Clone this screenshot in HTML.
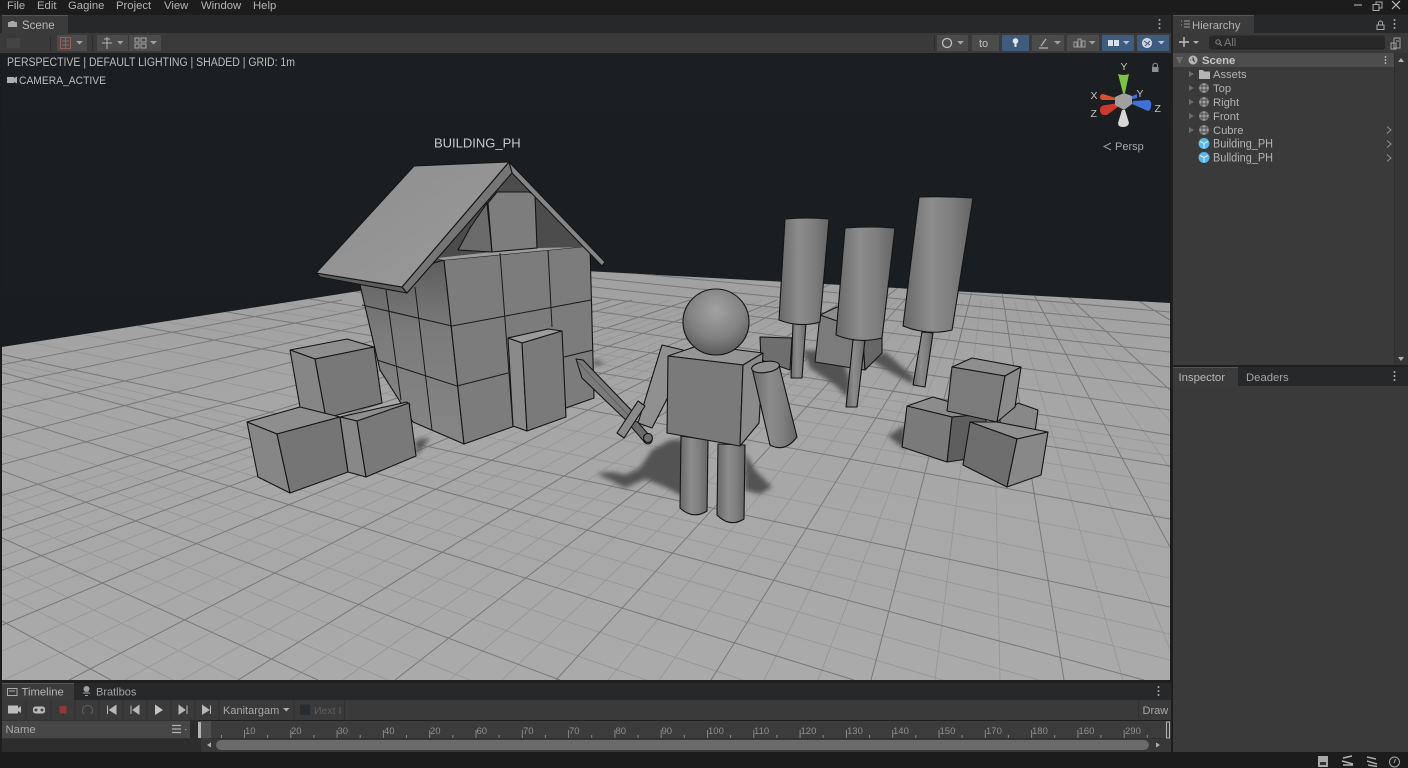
<!DOCTYPE html>
<html lang="en">
<head>
<meta charset="utf-8">
<title>Scene</title>
<style>
html,body{margin:0;padding:0;background:#1c1c1c;width:1408px;height:768px;overflow:hidden}
svg{display:block;position:absolute;left:0;top:0;overflow:hidden}
text{font-family:"Liberation Sans",sans-serif;font-size:11.3px;fill:#b4b4b4}
.o{stroke:#141414;stroke-width:1.1;stroke-linejoin:round}
.l{stroke:#1a1a1a;stroke-width:1;fill:none}
</style>
</head>
<body>
<svg width="1408" height="768" viewBox="0 0 1408 768" xmlns="http://www.w3.org/2000/svg">
<defs>
<linearGradient id="sky" x1="0" y1="0" x2="0" y2="1"><stop offset="0" stop-color="#1b1f21"/><stop offset="1" stop-color="#1a1b1d"/></linearGradient>
<linearGradient id="fl" x1="0" y1="0" x2="0" y2="1"><stop offset="0" stop-color="#a0a0a0"/><stop offset=".35" stop-color="#a6a6a6"/><stop offset="1" stop-color="#aaaaaa"/></linearGradient>
<linearGradient id="cyl" x1="0" y1="0" x2="1" y2="0"><stop offset="0" stop-color="#686868"/><stop offset=".4" stop-color="#8c8c8c"/><stop offset=".7" stop-color="#7e7e7e"/><stop offset="1" stop-color="#646464"/></linearGradient>
<linearGradient id="roof" x1="0" y1="0" x2="1" y2="1"><stop offset="0" stop-color="#8e8e8e"/><stop offset="1" stop-color="#9a9a9a"/></linearGradient>
<linearGradient id="wl" x1="0" y1="0" x2="0" y2="1"><stop offset="0" stop-color="#5e5e5e"/><stop offset=".4" stop-color="#7c7c7c"/><stop offset="1" stop-color="#858585"/></linearGradient>
<radialGradient id="hd" cx=".5" cy=".33" r=".7"><stop offset="0" stop-color="#a2a2a2"/><stop offset=".6" stop-color="#808080"/><stop offset="1" stop-color="#565656"/></radialGradient>
<filter id="bl" x="-20%" y="-20%" width="140%" height="140%"><feGaussianBlur stdDeviation="2.5"/></filter>
<clipPath id="vp"><rect x="2" y="53" width="1168" height="627"/></clipPath>
<clipPath id="fc"><polygon points="2,347 512,267 1170,303 1170,680 2,680"/></clipPath>
</defs>

<!-- chrome base -->
<rect width="1408" height="768" fill="#1c1c1c"/>
<rect x="0" y="15" width="1171" height="18" fill="#27282a"/>
<rect x="2" y="15" width="66" height="19" fill="#3b3b3b"/>
<rect x="2" y="15" width="66" height="1" fill="#2f5f86"/>
<rect x="0" y="33" width="1171" height="20" fill="#3a3a3a"/>

<!-- viewport -->
<g clip-path="url(#vp)">
<rect x="2" y="53" width="1168" height="627" fill="url(#sky)"/>
<g clip-path="url(#fc)">
<rect x="2" y="260" width="1168" height="420" fill="url(#fl)"/>
<path fill="none" stroke="#959595" stroke-width=".8" d="M0,318L1170,548M0,336L1170,578M0,360L1170,634M0,366L1170,660M0,386L1039,680M0,401L943,680M0,433L743,680M0,452L646,680M0,492L470,680M0,515L388,680M0,565L240,680M0,592L173,680M0,283L1170,484M0,292L1170,501M0,258L1170,445M0,267L1170,456
M125,680L815,300M182,680L830,300M290,680L857,300M343,680L870,300M449,680L890,300M502,680L897,300M608,680L920,300M659,680L935,300M764,680L957,300M818,680L963,300M935,680L981,300M1000,680L992,300M1123,680L1014,300M1170,649L1025,300M1170,468L1049,300M1170,421L1060,300M0,652L785,300M4,680L792,300M0,588L748,300M0,606L762,300M0,543L704,300M0,557L718,300M0,507L651,300M0,519L670,300"/>
<path fill="none" stroke="#787878" stroke-width="1" d="M0,208L1170,312M0,212L1170,325M0,216L1170,338M0,220L1170,352M0,225L1170,367M0,232L1170,388M0,240L1170,410M0,250L1170,435M0,275L1170,466M0,300L1170,519M0,354L1170,607M0,372L1144,680M0,415L854,680M0,470L560,680M0,537L318,680M0,620L111,680
M69,680L838,280M238,680L877,280M395,680L908,280M556,680L923,280M711,680L963,280M871,680L975,280M1064,680L1000,280M1170,547L1026,280M1170,390L1050,280M1170,320L1104,280M0,626L777,300M0,571L733,300M0,531L690,300M0,496L632,300M0,465L611,300M0,438L530,300M0,410L472,300M0,385L405,300M0,365L342,300"/>
</g>

<!-- shadows -->
<g fill="#525252" filter="url(#bl)">
<path d="M597,474Q610,470 625,475L640,468L652,450L670,440L684,440L684,497L665,487L645,479L625,488L612,481Z"/>
<path d="M745,452L755,470L772,487L760,494L745,490Z"/>
<path d="M803,350L840,352L850,380L848,398L835,385L810,368Z"/>
<path d="M868,358L885,352L915,378L912,384L890,372Z"/>
<path d="M888,436L905,425L905,450Z"/>
<path d="M416,440L430,438L416,456Z"/>
<path d="M594,360L606,363L594,366Z"/>
</g>

<!-- back cubes -->
<polygon class="o" points="760,337 792,338 790,370 761,360" fill="#6e6e6e"/>
<polygon class="o" points="820,315 837,307 882,325 863,340" fill="#8c8c8c"/>
<polygon class="o" points="820,315 863,330 865,370 815,362" fill="#7b7b7b"/>
<polygon class="o" points="863,340 882,338 882,353 865,370" fill="#666"/>

<!-- trees -->
<g class="o">
<polygon points="793,323 806,323 802,378 791,378" fill="url(#cyl)"/>
<path d="M785,219Q807,217 829,219L820,322Q800,328 779,320Z" fill="url(#cyl)"/>
<polygon points="853,340 865,340 857,407 846,407" fill="url(#cyl)"/>
<path d="M845,228Q870,226 895,228L882,338Q858,344 836,335Z" fill="url(#cyl)"/>
<polygon points="922,332 933,333 925,387 913,385" fill="url(#cyl)"/>
<path d="M919,197Q946,196 973,198L952,330Q928,336 903,326Z" fill="url(#cyl)"/>
</g>

<!-- house -->
<polygon points="407,293 512,173 602,264 590,247 444,262" fill="#4c4c4c"/>
<polygon class="o" points="360,285 444,260 464,444 413,422 380,370" fill="url(#wl)"/>
<polygon class="o" points="444,260 590,246 594,398 464,444" fill="#7c7c7c"/>
<polygon points="437,258 492,252 537,248 590,246 444,260" fill="#9c9c9c"/>
<path class="l" d="M386,290L401,400M415,287L432,430M500,253L513,427M548,250L552,327M362,305L452,326L591,300M377,360L457,386L508,373M564,357L593,350"/>
<polygon points="512,173 590,247 537,248 535,195 529,192 497,192" fill="#4c4c4c"/>
<polygon class="o" points="487,203 492,252 458,250 470,228" fill="#6b6b6b"/>
<polygon class="o" points="488,203 497,192 529,192 535,195 537,248 492,252" fill="#7d7d7d"/>
<polygon class="o" points="509,162 605,262 602,266 512,173" fill="#858585"/>
<polygon class="o" points="316,273 320,277 407,293 402,287" fill="#5e5e5e"/>
<polygon class="o" points="402,287 509,162 512,173 407,293" fill="#757575"/>
<polygon class="o" points="414,166 509,162 402,287 316,273" fill="url(#roof)"/>
<polygon class="o" points="508,338 548,329 562,331 522,343" fill="#9c9c9c"/>
<polygon class="o" points="508,338 522,343 527,431 513,426" fill="#8a8a8a"/>
<polygon class="o" points="522,343 562,331 566,417 527,431" fill="#7a7a7a"/>

<!-- left boxes -->
<polygon class="o" points="290,350 347,339 374,347 315,359" fill="#8e8e8e"/>
<polygon class="o" points="290,350 315,359 326,418 300,407" fill="#868686"/>
<polygon class="o" points="315,359 374,347 382,403 326,418" fill="#787878"/>
<polygon class="o" points="247,422 300,407 340,417 277,434" fill="#8e8e8e"/>
<polygon class="o" points="247,422 277,434 290,493 258,477" fill="#868686"/>
<polygon class="o" points="277,434 340,417 348,472 290,493" fill="#757575"/>
<polygon class="o" points="340,417 407,402 410,405 357,421" fill="#8e8e8e"/>
<polygon class="o" points="340,417 357,421 366,477 348,472" fill="#888"/>
<polygon class="o" points="357,421 409,403 416,456 366,477" fill="#797979"/>

<!-- right pile -->
<polygon class="o" points="1000,418 1018,403 1038,410 1035,432 1000,432" fill="#888"/>
<polygon class="o" points="907,406 933,397 990,414 952,417" fill="#8c8c8c"/>
<polygon class="o" points="952,417 988,414 975,458 947,462" fill="#5e5e5e"/>
<polygon class="o" points="907,406 952,417 947,462 902,447" fill="#7a7a7a"/>
<polygon class="o" points="952,367 972,358 1021,367 1005,376" fill="#8e8e8e"/>
<polygon class="o" points="952,367 1005,376 997,422 947,411" fill="#7b7b7b"/>
<polygon class="o" points="1005,376 1021,367 1015,407 997,422" fill="#8a8a8a"/>
<polygon class="o" points="970,422 997,422 1048,432 1017,439" fill="#909090"/>
<polygon class="o" points="970,422 1017,439 1007,487 963,465" fill="#6e6e6e"/>
<polygon class="o" points="1017,439 1048,432 1041,475 1007,487" fill="#888"/>

<!-- character -->
<polygon class="o" points="662,345 683,350 668,397 652,428 638,423" fill="#909090"/>
<g class="o">
<path d="M681,436L680,508Q693,520 707,511L708,440Z" fill="url(#cyl)"/>
<path d="M718,444L717,515Q730,528 744,519L745,445Z" fill="url(#cyl)"/>
</g>
<polygon class="o" points="668,356 700,345 763,353 743,365" fill="#959595"/>
<polygon class="o" points="668,356 743,365 740,446 667,433" fill="#7a7a7a"/>
<polygon class="o" points="743,365 763,353 759,423 740,446" fill="#8a8a8a"/>
<circle class="o" cx="716" cy="322" r="33" fill="url(#hd)"/>
<path class="o" d="M752,368L770,445Q785,453 797,437L779,365Z" fill="url(#cyl)"/>
<ellipse class="o" cx="765.500" cy="367" rx="14" ry="5.500" transform="rotate(-8 765.500 367)" fill="#8f8f8f"/>
<!-- sword -->
<path d="M635,425L648,440" stroke="#141414" stroke-width="9" stroke-linecap="round"/>
<path d="M635,425L648,440" stroke="#6a6a6a" stroke-width="7" stroke-linecap="round"/>
<polygon class="o" points="576,359 583,360 634,413 629,423 582,378" fill="#7a7a7a"/>
<path d="M578,362L631,418" stroke="#5e5e5e" stroke-width="1"/>
<polygon class="o" points="638,401 645,406 624,438 617,433" fill="#8a8a8a"/>
<circle class="o" cx="648" cy="438" r="4.500" fill="#6e6e6e"/>

<text x="434" y="147.500" style="font-size:13px;fill:#c8c8c8">BUILDING_PH</text>

<!-- overlay -->
<text x="7" y="66" textLength="288" lengthAdjust="spacingAndGlyphs" style="font-size:11.500px;fill:#bdbdbd">PERSPECTIVE | DEFAULT LIGHTING | SHADED | GRID: 1m</text>
<rect x="7" y="77" width="7" height="6" fill="#b0b0b0"/><path d="M14,78L17,76.500V83.500L14,82Z" fill="#b0b0b0"/>
<text x="19" y="84" textLength="87" lengthAdjust="spacingAndGlyphs" style="font-size:11px;fill:#bdbdbd">CAMERA_ACTIVE</text>

<!-- gizmo -->
<path d="M1118,74Q1124,76 1129,74L1125,93H1123Z" fill="#7cc243"/>
<path d="M1100,97Q1100,94 1103,94L1116,98V100L1103,100Q1100,100 1100,97Z" fill="#d6512b"/>
<path d="M1100,110Q1100,105 1106,105L1118,103L1119,106L1107,115Q1100,116 1100,110Z" fill="#c93a2d"/>
<path d="M1151,106Q1152,102 1149,100L1133,101L1132,104L1148,111Q1151,110 1151,106Z" fill="#3f71d8"/>
<path d="M1137,94L1128,98L1129,100L1137,98Z" fill="#3f71d8"/>
<path d="M1122,110H1125L1129,123Q1128,127 1123,127Q1118,127 1118,123Z" fill="#d8d8d8"/>
<path d="M1115,97L1124,93L1132,96L1132,104L1124,110L1115,105Z" fill="#a0a0a0"/>
<text x="1120.500" y="70" style="font-size:10.500px;fill:#c4c4c4">Y</text>
<text x="1090.500" y="99" style="font-size:10.500px;fill:#c4c4c4">X</text>
<text x="1136.500" y="97" style="font-size:10.500px;fill:#c4c4c4">Y</text>
<text x="1090.500" y="117" style="font-size:10.500px;fill:#c4c4c4">Z</text>
<text x="1154.500" y="112" style="font-size:10.500px;fill:#c4c4c4">Z</text>
<rect x="1152" y="67" width="6.500" height="5" fill="#8f8f8f"/><path d="M1153,67V65.500A2.200,2.200 0 0 1 1157.500,65.500V67" stroke="#8f8f8f" fill="none"/>
<path d="M1111,143L1104,146.500L1111,150" stroke="#999" fill="none"/>
<text x="1115" y="150" style="font-size:11px;fill:#a8a8a8">Persp</text>
</g>

<!-- menu -->
<text x="7" y="9">File</text><text x="37" y="9">Edit</text><text x="68" y="9">Gagine</text><text x="116" y="9">Project</text><text x="164" y="9">View</text><text x="201" y="9">Window</text><text x="253" y="9">Help</text>
<path d="M1354,5H1362" stroke="#aaa" stroke-width="1.200"/>
<path d="M1373,4.500h6v6h-6zM1376,4.500V2h6v6h-3" stroke="#aaa" fill="none"/>
<path d="M1392,1L1400,9M1400,1L1392,9" stroke="#bbb" stroke-width="1.200"/>

<!-- Scene tab + toolbar -->
<path d="M8,22h2l1,-1h3l1,1h2v5H8z" fill="#a6a6a6"/>
<text x="22" y="29" style="font-size:11.500px;fill:#b8b8b8">Scene</text>
<g fill="#a8a8a8"><circle cx="1159.500" cy="20" r="1"/><circle cx="1159.500" cy="24" r="1"/><circle cx="1159.500" cy="28" r="1"/></g>
<rect x="7" y="38" width="13" height="10" fill="#444"/>
<rect x="50" y="36" width="1" height="15" fill="#2c2c2c"/><rect x="92" y="36" width="1" height="15" fill="#2c2c2c"/><rect x="934" y="36" width="1" height="15" fill="#2c2c2c"/>
<g fill="#4b4b4b">
<rect x="57" y="35" width="30" height="16" rx="1"/><rect x="97" y="35" width="31" height="16" rx="1"/><rect x="129" y="35" width="32" height="16" rx="1"/>
<rect x="937" y="35" width="31" height="16" rx="1"/><rect x="972" y="35" width="27" height="16" rx="1"/>
<rect x="1032" y="35" width="32" height="16" rx="1"/><rect x="1067" y="35" width="32" height="16" rx="1"/>
</g>
<g fill="#3f5b7d"><rect x="1002" y="35" width="27" height="16" rx="1"/><rect x="1102" y="35" width="32" height="16" rx="1"/><rect x="1137" y="35" width="32" height="16" rx="1"/></g>
<rect x="60.500" y="37.500" width="10" height="11" fill="none" stroke="#95605c"/><path d="M62,41h7M62,45h7M65.500,38V48" stroke="#95605c"/>
<path d="M107,37V49M102,43H112M104,39H110" stroke="#b0b0b0" fill="none"/>
<path d="M135,38h4v4h-4zM141,38h5v4h-5zM135,44h4v4h-4zM141,44h5v4h-5z" fill="none" stroke="#a5a5a5"/>
<g fill="#a0a0a0"><path d="M76,41h7l-3.500,3.500z"/><path d="M117,41h6.500l-3.250,3.500z"/><path d="M150,41h7l-3.500,3.500z"/><path d="M957,41h7l-3.500,3.500z"/><path d="M1054,41h7l-3.500,3.500z"/><path d="M1089,41h6.500l-3.250,3.500z"/></g>
<g fill="#b3c4da"><path d="M1123,41h6.500l-3.250,3.500z"/><path d="M1158,41h6.500l-3.250,3.500z"/></g>
<circle cx="947" cy="43" r="4.500" fill="none" stroke="#c0c0c0" stroke-width="1.300"/>
<text x="979" y="47" style="font-size:11px;fill:#c0c0c0">to</text>
<circle cx="1015.500" cy="41" r="2.800" fill="#e6e6e6"/><rect x="1014.500" y="42" width="2" height="5" fill="#e6e6e6"/>
<path d="M1039,48H1048M1041,46L1046,39" stroke="#b0b0b0" stroke-width="1.300"/>
<path d="M1074,47V42h3v5zM1078,47V39h3v8zM1082,47V41h3v6z" fill="none" stroke="#9c9c9c"/>
<path d="M1108,40h5v6h-5zM1114,40h5v6h-5z" fill="#d8dfe8"/>
<circle cx="1147" cy="43" r="4.500" fill="#c5ced9" stroke="#e4e4e4"/><path d="M1144,41L1150,45M1150,41L1145,46" stroke="#3f5b7d"/>

<!-- hierarchy -->
<rect x="1171" y="14" width="237" height="352" fill="#1f1f20"/>
<rect x="1173" y="15" width="235" height="350" fill="#3a3a3a"/>
<rect x="1173" y="15" width="235" height="18" fill="#27282a"/>
<rect x="1173" y="15" width="81" height="19" fill="#3b3b3b"/>
<rect x="1173" y="15" width="81" height="1" fill="#2f5f86"/>
<path d="M1181,21h1M1181,25h1M1184,21h6M1184,24h6M1184,27h6" stroke="#9c9c9c"/>
<text x="1192" y="29" style="font-size:11.300px;fill:#b4b4b4">Hierarchy</text>
<rect x="1377" y="25" width="7" height="4.500" fill="none" stroke="#a8a8a8"/><path d="M1378.500,25V23A2,2 0 0 1 1382.500,23V25" fill="none" stroke="#a8a8a8"/>
<g fill="#a8a8a8"><circle cx="1394.500" cy="20" r="1"/><circle cx="1394.500" cy="24" r="1"/><circle cx="1394.500" cy="28" r="1"/></g>
<rect x="1173" y="33" width="235" height="20" fill="#3a3a3a"/>
<path d="M1184,37V47M1179,42H1189" stroke="#c0c0c0" stroke-width="1.400"/>
<path d="M1193,41h6l-3,3z" fill="#b0b0b0"/>
<rect x="1209" y="35.500" width="176" height="14" rx="3" fill="#282828"/>
<circle cx="1218" cy="42" r="2.200" fill="none" stroke="#888"/><path d="M1219.500,43.500L1222,46" stroke="#888"/>
<text x="1224" y="46" style="font-size:11px;fill:#7c7c7c">All</text>
<path d="M1394,38h6v10h-6zM1391,43h5v6h-5zM1396,41h3" fill="none" stroke="#a0a0a0"/>
<rect x="1173" y="53" width="222" height="14" fill="#4d4d4d"/>
<rect x="1395" y="53" width="13" height="312" fill="#353535"/>
<rect x="1394" y="53" width="1" height="312" fill="#2e2e2e"/>
<path d="M1398,62L1401,58L1404,62Z" fill="#b0b0b0"/>
<path d="M1398,357L1401,361L1404,357Z" fill="#b0b0b0"/>
<path d="M1176,57h7l-3.500,7z" fill="#6c6c6c"/>
<circle cx="1193" cy="60" r="4.500" fill="#b5b5b5"/><path d="M1193,57V60L1195,62M1190,60H1191" stroke="#4d4d4d"/>
<text x="1202" y="64" style="font-size:11.300px;font-weight:bold;fill:#c4c4c4">Scene</text>
<g fill="#c0c0c0"><circle cx="1385.500" cy="57" r=".9"/><circle cx="1385.500" cy="60" r=".9"/><circle cx="1385.500" cy="63" r=".9"/></g>
<g fill="#6c6c6c"><path d="M1189,71v6l5,-3z"/><path d="M1189,85v6l5,-3z"/><path d="M1189,99v6l5,-3z"/><path d="M1189,113v6l5,-3z"/><path d="M1189,127v6l5,-3z"/></g>
<path d="M1199,70h4l1,1.500h6V79h-11z" fill="#b4b4b4"/>
<g fill="#9f9f9f" stroke="#555" stroke-width=".5">
<circle cx="1204" cy="88" r="5"/><circle cx="1204" cy="102" r="5"/><circle cx="1204" cy="116" r="5"/><circle cx="1204" cy="130" r="5"/>
</g>
<path d="M1199.500,86H1208.500M1199.500,90H1208.500M1202,83.500V92.500M1206,83.500V92.500M1199.500,100H1208.500M1199.500,104H1208.500M1202,97.500V106.500M1206,97.500V106.500M1199.500,114H1208.500M1199.500,118H1208.500M1202,111.500V120.500M1206,111.500V120.500M1199.500,128H1208.500M1199.500,132H1208.500M1202,125.500V134.500M1206,125.500V134.500" stroke="#4d4d4d" stroke-width=".9"/>
<g fill="#5ab7e8"><circle cx="1204" cy="143.500" r="5.500"/><circle cx="1204" cy="157.500" r="5.500"/></g>
<path d="M1200,141.500L1204,143.500L1208,141.500M1204,143.500V148M1200,155.500L1204,157.500L1208,155.500M1204,157.500V162" stroke="#d8f0fc" fill="none"/>
<text x="1213" y="78" style="font-size:11.200px">Assets</text>
<text x="1213" y="92" style="font-size:11.200px">Top</text>
<text x="1213" y="106" style="font-size:11.200px">Right</text>
<text x="1213" y="120" style="font-size:11.200px">Front</text>
<text x="1213" y="134" style="font-size:11.200px">Cubre</text>
<text x="1213" y="147.500" textLength="60" lengthAdjust="spacingAndGlyphs" style="font-size:11.500px">Building_PH</text>
<text x="1213" y="161.500" textLength="60" lengthAdjust="spacingAndGlyphs" style="font-size:11.500px">Bullding_PH</text>
<path d="M1387,126.500L1391,130L1387,133.500M1387,140.500L1391,144L1387,147.500M1387,154.500L1391,158L1387,161.500" stroke="#8f8f8f" fill="none"/>

<!-- inspector -->
<rect x="1171" y="365" width="237" height="22" fill="#1f1f20"/>
<rect x="1173" y="367" width="235" height="19" fill="#27282a"/>
<rect x="1173" y="367" width="65" height="19" fill="#3b3b3b"/>
<rect x="1173" y="367" width="65" height="1" fill="#2f5f86"/>
<text x="1178.500" y="381" style="font-size:11.300px;fill:#b8b8b8">Inspector</text>
<text x="1246" y="381" style="font-size:11.300px;fill:#a4a4a4">Deaders</text>
<g fill="#b0b0b0"><circle cx="1394.500" cy="372" r="1"/><circle cx="1394.500" cy="376" r="1"/><circle cx="1394.500" cy="380" r="1"/></g>
<rect x="1173" y="386" width="235" height="366" fill="#3a3a3a"/>

<!-- timeline -->
<rect x="0" y="680" width="1172" height="72" fill="#1f1f20"/>
<rect x="2" y="683" width="1169" height="17" fill="#27282a"/>
<rect x="2" y="683" width="72" height="17" fill="#3b3b3b"/>
<rect x="2" y="683" width="72" height="1" fill="#2f5f86"/>
<rect x="7.500" y="688.500" width="9.500" height="7" fill="none" stroke="#aaa"/><path d="M9,691H15" stroke="#aaa"/>
<text x="21.500" y="695.500" style="font-size:11.300px;fill:#b8b8b8">Timeline</text>
<circle cx="86.500" cy="689" r="3" fill="#a0a0a0"/><path d="M83,693H90M85,695.500H88" stroke="#a0a0a0"/>
<text x="96" y="695.500" style="font-size:11px;fill:#a4a4a4">Bratlbos</text>
<g fill="#a8a8a8"><circle cx="1158.500" cy="687" r="1"/><circle cx="1158.500" cy="691" r="1"/><circle cx="1158.500" cy="695" r="1"/></g>
<rect x="2" y="700" width="1169" height="20" fill="#3a3a3a"/>
<path d="M26,700V720M51,700V720M75,700V720M99,700V720M123,700V720M147,700V720M171,700V720M195,700V720M219,700V720M294,700V720M344.500,700V720M1138.500,700V720" stroke="#303030"/>
<rect x="8" y="705.500" width="10" height="8" fill="#bcbcbc"/><path d="M18,708L21,706V713L18,711Z" fill="#bcbcbc"/>
<rect x="33" y="706.500" width="12" height="7" rx="2.500" fill="#bcbcbc"/><circle cx="36" cy="710" r="1.500" fill="#444"/><circle cx="42" cy="710" r="1.500" fill="#444"/>
<rect x="59.500" y="706" width="7" height="7.500" fill="#8f3a35"/>
<path d="M84,714A5,5 0 1 1 91,714" stroke="#5e5e5e" fill="none"/>
<path d="M107.500,705.500V714M116,705.500V714L109.500,710Z" stroke="#b8b8b8" fill="#b8b8b8"/>
<path d="M131,705.500V714M139,705.500V714L133,710Z" stroke="#b8b8b8" fill="#b8b8b8"/>
<path d="M155,704.500V715L163,710Z" fill="#c4c4c4"/>
<path d="M179,705.500V714L185,710ZM187,705.500V714" stroke="#b8b8b8" fill="#b8b8b8"/>
<path d="M202.500,705.500V714L209,710ZM210.500,705.500V714" stroke="#b8b8b8" fill="#b8b8b8"/>
<text x="223" y="714" style="font-size:11px;fill:#a8a8a8">Kanitarɡam</text>
<path d="M283,708h6.500l-3.250,3.500z" fill="#b0b0b0"/>
<rect x="300" y="704.500" width="10" height="10.500" rx="1" fill="#2a2d2f"/>
<text x="314" y="714" style="font-size:10.500px;fill:#5e5e5e">Иext I</text>
<text x="1142.500" y="714" style="font-size:11px;fill:#a8a8a8">Draw</text>

<rect x="2" y="720.500" width="188" height="18" fill="#474747"/>
<text x="5.500" y="733" style="font-size:11.300px;fill:#a8a8a8">Name</text>
<path d="M172,725.500H181M172,729H181M172,732.500H181" stroke="#b0b0b0" stroke-width="1.200"/><path d="M185,729.500h1.500" stroke="#999"/>
<rect x="190" y="720" width="8" height="19" fill="#2b2b2b"/>
<rect x="198" y="721" width="973" height="17.500" fill="#3c3c3c"/>
<rect x="198" y="721" width="13" height="17.500" fill="#4f4f4f"/>
<rect x="198" y="722" width="3" height="16" fill="#b4b4b4"/>
<rect x="1166.500" y="722" width="3" height="16" fill="#3c3c3c" stroke="#b4b4b4"/>
<path stroke="#888" d="M244.500,730V738M290.800,730V738M337.100,730V738M383.400,730V738M429.700,730V738M476,730V738M522.300,730V738M568.600,730V738M614.900,730V738M661.200,730V738M707.500,730V738M753.800,730V738M800.100,730V738M846.400,730V738M892.700,730V738M939,730V738M985.300,730V738M1031.600,730V738M1077.900,730V738M1124.200,730V738M221.500,735V738M267.600,735V738M313.900,735V738M360.200,735V738M406.500,735V738M452.800,735V738M499.100,735V738M545.400,735V738M591.700,735V738M638,735V738M684.300,735V738M730.600,735V738M776.900,735V738M823.200,735V738M869.500,735V738M915.800,735V738M962.100,735V738M1008.400,735V738M1054.700,735V738M1101,735V738M1147.300,735V738"/>
<text x="245" y="734" style="font-size:9.500px;fill:#8f8f8f">10</text>
<text x="291" y="734" style="font-size:9.500px;fill:#8f8f8f">20</text>
<text x="337.500" y="734" style="font-size:9.500px;fill:#8f8f8f">30</text>
<text x="384" y="734" style="font-size:9.500px;fill:#8f8f8f">40</text>
<text x="430" y="734" style="font-size:9.500px;fill:#8f8f8f">20</text>
<text x="476.500" y="734" style="font-size:9.500px;fill:#8f8f8f">60</text>
<text x="523" y="734" style="font-size:9.500px;fill:#8f8f8f">70</text>
<text x="569" y="734" style="font-size:9.500px;fill:#8f8f8f">70</text>
<text x="615.500" y="734" style="font-size:9.500px;fill:#8f8f8f">80</text>
<text x="661.500" y="734" style="font-size:9.500px;fill:#8f8f8f">90</text>
<text x="708" y="734" style="font-size:9.500px;fill:#8f8f8f">100</text>
<text x="754" y="734" style="font-size:9.500px;fill:#8f8f8f">110</text>
<text x="800.500" y="734" style="font-size:9.500px;fill:#8f8f8f">120</text>
<text x="847" y="734" style="font-size:9.500px;fill:#8f8f8f">130</text>
<text x="893" y="734" style="font-size:9.500px;fill:#8f8f8f">140</text>
<text x="939.500" y="734" style="font-size:9.500px;fill:#8f8f8f">150</text>
<text x="986" y="734" style="font-size:9.500px;fill:#8f8f8f">170</text>
<text x="1032" y="734" style="font-size:9.500px;fill:#8f8f8f">180</text>
<text x="1078.500" y="734" style="font-size:9.500px;fill:#8f8f8f">160</text>
<text x="1125" y="734" style="font-size:9.500px;fill:#8f8f8f">290</text>
<rect x="2" y="739" width="199" height="13" fill="#2d2d2d"/>
<rect x="201" y="739" width="970" height="13" fill="#383838"/>
<rect x="216" y="740" width="933" height="10" rx="5" fill="#6a6a6a"/>
<path d="M211,742.500V747.500L207,745Z" fill="#b0b0b0"/>
<path d="M1156,742.500V747.500L1160,745Z" fill="#b0b0b0"/>

<!-- status -->
<rect x="1318" y="756" width="10" height="11" fill="#a8a8a8"/><rect x="1320" y="762" width="6" height="3" fill="#333"/>
<path d="M1343,758L1352,756M1342,761L1353,764M1343,765H1353" stroke="#b4b4b4" stroke-width="1.500"/>
<path d="M1367,757L1376,759M1367,761L1377,764M1368,765L1377,766.500" stroke="#a8a8a8" stroke-width="1.500"/>
<circle cx="1394.500" cy="762" r="5" fill="none" stroke="#a8a8a8"/><path d="M1395.500,759L1394,763" stroke="#a8a8a8"/>
</svg>
</body>
</html>
